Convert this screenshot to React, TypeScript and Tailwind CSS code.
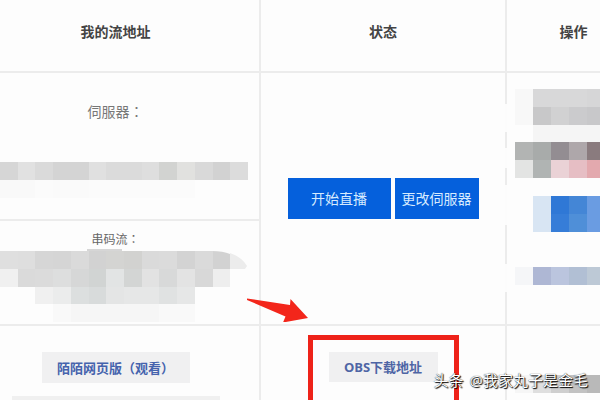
type MosaicProps = {
  rows: string[][];
  cell?: number;
  className: string;
};

const serverRows = [
  ['#d6d6d6', '#e1e1e1', '#dadada', '#d4d4d4', '#d4d4d4', '#e0e0e0', '#dbdbdb', '#dbdbdb', '#dedede', '#d2d3d1', '#e1e1df', '#d9d9d9', '#d2d2d2', '#dcdcdc'],
  ['#f9f9f9', '#f9f9f9', '#fbfbfb', '#fafafa', '#fafafa', '#fbfbfb', '#fbfbfb', '#fbfbfb', '#fbfbfb', '#fbfbfb', '#fbfbfb', '', '', ''],
];

const streamRows = [
  ['#dfdfdf', '#dedede', '#d6d6d6', '#d5d5d5', '#dadada', '#d2d2d2', '#d4d4d2', '#d2d2d0', '#dadada', '#dbdbdb', '#d3d3d3', '#dadada', '#d2d2d2', ''],
  ['#f0f0f0', '#dadada', '#dbdbdb', '#dddede', '#d6d7d7', '#d1d4d3', '#e2e4e4', '#d3d5d4', '#e2e2e2', '#d8d9d9', '#e3e3e3', '#d8d8d8', '#eeeeee', ''],
  ['', '', '#f0f0f0', '#ebecec', '#dcdfdf', '#d8dbdb', '#e4e5e5', '#e6e7e7', '#e6e7e7', '#e0e2e2', '#e6e7e7', '', '', ''],
  ['', '', '', '#f9f9f9', '#f6f6f6', '#f6f6f6', '#f6f6f6', '#f6f6f6', '#f6f6f6', '#f9f9f9', '#f9f9f9', '', '', ''],
];

const actionRows = [
  ['#f8f8f8', '#d8d8d9', '#d8d8d9', '#d8d8d9', '#d6d6d7'],
  ['#f8f8f8', '#c8c8c9', '#d1d1d2', '#cbcbcd', '#c8c8ca'],
  ['', '#f5f5f5', '#f5f5f5', '#f5f5f5', '#f5f5f5'],
  ['#b2b4b3', '#a8abaa', '#938d92', '#aea7aa', '#8a7b7e'],
  ['#e3e4e3', '#b0b4b3', '#ead2d6', '#e6bec4', '#e3a9ae'],
  ['', '', '', '', ''],
  ['', '#d8e5f3', '#2f78d6', '#4486d6', '#6a9ce2'],
  ['', '#d8e5f3', '#367dd8', '#4f8fd8', '#6a9ce2'],
  ['', '', '', '', ''],
  ['', '', '', '', ''],
  ['#f5f6f8', '#aeb7d4', '#bbc5de', '#b1bfd4', '#bdc9d6'],
];

// the divider is broken where the blurred blocks run over it
const dividerGaps = ['top-[31px] h-7', 'top-[75px] h-5', 'top-[112px] h-10', 'top-[191px] h-7'];

function Mosaic({ rows, cell = 18, className }: MosaicProps) {
  const width = rows[0].length * cell;
  const height = rows.length * cell;

  return (
    <svg
      className={className}
      viewBox={`0 0 ${width} ${height}`}
      preserveAspectRatio="none"
      shapeRendering="crispEdges"
      aria-hidden="true"
    >
      {rows.map((row, y) =>
        row.map((color, x) =>
          color ? <rect key={`${x}-${y}`} x={x * cell} y={y * cell} width={cell} height={cell} fill={color} /> : null
        )
      )}
    </svg>
  );
}

function StreamTable() {
  return (
    <table className="w-full table-fixed border-separate border-spacing-0 text-center text-[14px] leading-5 text-[#444]">
      <colgroup>
        <col className="w-[261px]" />
        <col className="w-[246px]" />
        <col />
      </colgroup>
      <thead>
        <tr className="h-[73px]">
          <th className="border-r-2 border-b-2 border-[#ececec] pr-7 pb-2 font-bold">我的流地址</th>
          <th className="border-r-2 border-b-2 border-[#ececec] pb-2 font-bold">状态</th>
          <th className="border-b-2 border-[#ececec] pb-2 pl-10 font-bold">操作</th>
        </tr>
      </thead>
      <tbody>
        <tr className="h-[148px]">
          <td className="border-r-2 border-b-2 border-[#ececec] pt-7 align-top">
            <p className="pr-7 text-[#777]">
              伺服器<span className="font-['Noto_Sans_CJK_TC',sans-serif]">：</span>
            </p>
            <Mosaic rows={serverRows} className="mt-10 h-9 w-[248px]" />
          </td>
          <td rowSpan={2} className="border-r-2 border-b-2 border-[#ececec]">
            <div className="flex justify-center gap-1">
              <button className="h-[41px] w-[103px] bg-[#0560dc] text-[#d6ebff]">开始直播</button>
              <button className="h-[41px] w-[84px] bg-[#0560dc] text-[#d6ebff]">更改伺服器</button>
            </div>
          </td>
          <td rowSpan={2} className="relative border-b-2 border-[#ececec] pt-4 pl-2 align-top">
            {dividerGaps.map((gap) => (
              <span key={gap} className={`absolute -left-0.5 w-0.5 bg-[#fcfcfc] ${gap}`} />
            ))}
            <Mosaic rows={actionRows} className="h-[196px] w-[90px]" />
          </td>
        </tr>
        <tr className="h-[105px]">
          <td className="border-r-2 border-b-2 border-[#ececec] pt-2 align-top">
            <p className="pr-7 text-[12px] text-[#666]">
              串码流<span className="font-['Noto_Sans_CJK_TC',sans-serif]">：</span>
            </p>
            <div className="relative">
              <Mosaic rows={streamRows} className="mt-px h-[71px] w-[248px]" />
              <svg className="absolute -top-0.5 left-0 h-5 w-[248px]" viewBox="0 0 248 20" aria-hidden="true">
                <path d="M87 0h35v2H87z" fill="#d6d6d6" />
                <path d="M230 4q12 4 17 13l-2 3h-15z" fill="#ececec" />
                <path d="M212 1h18v4q-7-3-18-3z" fill="#fdfdfd" />
              </svg>
            </div>
          </td>
        </tr>
        <tr>
          <td className="border-r-2 border-[#ececec] pt-[26px] align-top">
            <div className="flex flex-col items-center gap-[13px] pr-7">
              <a href="#watch" className="flex h-[31px] w-[148px] items-center justify-center bg-[#f0f0f1] text-[13px] font-bold text-[#4563ad]">
                陌陌网页版（观看）
              </a>
              <div className="h-8 w-[208px] bg-[#f0f0f0]" />
            </div>
          </td>
          <td className="relative border-r-2 border-[#ececec] pt-[9px] align-top">
            <div className="mx-auto flex h-24 w-[151px] items-start justify-center border-[5px] border-[#ee2219] pt-3">
              <a href="#obs" className="flex h-[30px] w-[109px] items-center justify-center bg-[#f0f0f1] text-[13px] font-bold text-[#4e65a5]">
                OBS下载地址
              </a>
            </div>
            <svg className="absolute -top-7 -left-3.5 h-6 w-[61px]" viewBox="0 0 61 24" aria-hidden="true">
              <path d="M0 0.5L43 7L43.5 1L61 20L36 24.5L38.5 18.5L0 2Z" fill="#f3261b" />
            </svg>
          </td>
          <td className="pt-[49px] pl-2 align-top">
            <Mosaic rows={[['#f6f6f6', '#dfdfdf', '#cfcfcf', '#c2c2c2', '#b9b9b9']]} className="h-[18px] w-[90px]" />
          </td>
        </tr>
      </tbody>
    </table>
  );
}

function App() {
  return (
    <main className="relative h-screen overflow-hidden bg-[#fdfdfd] font-['Open_Sans','Noto_Sans_CJK_SC',sans-serif]">
      <StreamTable />
      <p className="absolute right-3 bottom-2.5 flex gap-1.5 text-[15px] leading-5 text-white [text-shadow:1px_1px_1px_#000,0_0_1px_#000]">
        <span>头条</span>
        <span>@我家丸子是金毛</span>
      </p>
    </main>
  );
}

export default App;
